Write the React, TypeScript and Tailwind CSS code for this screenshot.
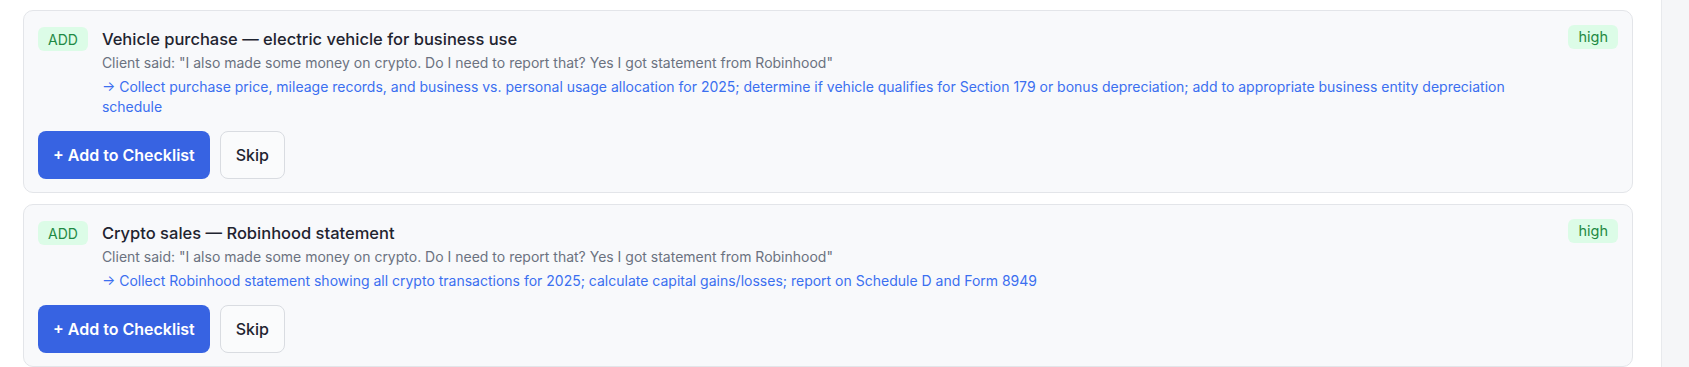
import React from "react";

type Item = {
  title: string;
  said: string;
  action: string;
};

const items: Item[] = [
  {
    title: "Vehicle purchase — electric vehicle for business use",
    said: 'Client said: "I also made some money on crypto. Do I need to report that? Yes I got statement from Robinhood"',
    action:
      "→ Collect purchase price, mileage records, and business vs. personal usage allocation for 2025; determine if vehicle qualifies for Section 179 or bonus depreciation; add to appropriate business entity depreciation schedule",
  },
  {
    title: "Crypto sales — Robinhood statement",
    said: 'Client said: "I also made some money on crypto. Do I need to report that? Yes I got statement from Robinhood"',
    action:
      "→ Collect Robinhood statement showing all crypto transactions for 2025; calculate capital gains/losses; report on Schedule D and Form 8949",
  },
];

function Card({ item }: { item: Item }) {
  return (
    <div className="rounded-[10px] border border-[#e3e5e9] bg-[#f8f9fb] px-3.5 pt-3.5 pb-[13px]">
      <div className="flex items-start gap-3.5">
        <span className="mt-0.5 flex h-6 items-center rounded-md bg-[#dcfce7] px-2.5 text-[14px] text-[#1f8a44]">
          ADD
        </span>
        <div className="min-w-0 flex-1">
          <div className="text-[16.5px] leading-7 font-medium text-[#1f2430]">{item.title}</div>
          <div className="text-[14px] leading-5 text-[#6b7280]">{item.said}</div>
          <div className="mt-1 text-[14px] leading-5 text-[#3b6ff0]">{item.action}</div>
        </div>
        <span className="flex h-6 items-center rounded-md bg-[#dcfce7] px-2.5 text-[14.5px] text-[#1f8a44]">
          high
        </span>
      </div>
      <div className="mt-3.5 flex gap-2.5">
        <button className="h-12 rounded-lg bg-[#3763e2] px-[15px] text-[16px] font-semibold text-white">
          + Add to Checklist
        </button>
        <button className="h-12 rounded-lg border border-[#d9dce1] bg-[#fafbfc] px-[15px] text-[16px] font-medium text-[#1f2430]">
          Skip
        </button>
      </div>
    </div>
  );
}

export default function App() {
  return (
    <div
      className="flex h-[367px] w-full overflow-hidden bg-white"
      style={{ fontFamily: "Inter, 'Noto Sans', sans-serif" }}
    >
      <div className="flex flex-1 flex-col gap-[11px] pt-[10px] pl-[23px] pr-[28px]">
        {items.map((it, i) => (
          <Card key={i} item={it} />
        ))}
      </div>
      <div className="w-[28px] shrink-0 border-l border-[#e8eaed] bg-[#f5f6f8]" />
    </div>
  );
}
